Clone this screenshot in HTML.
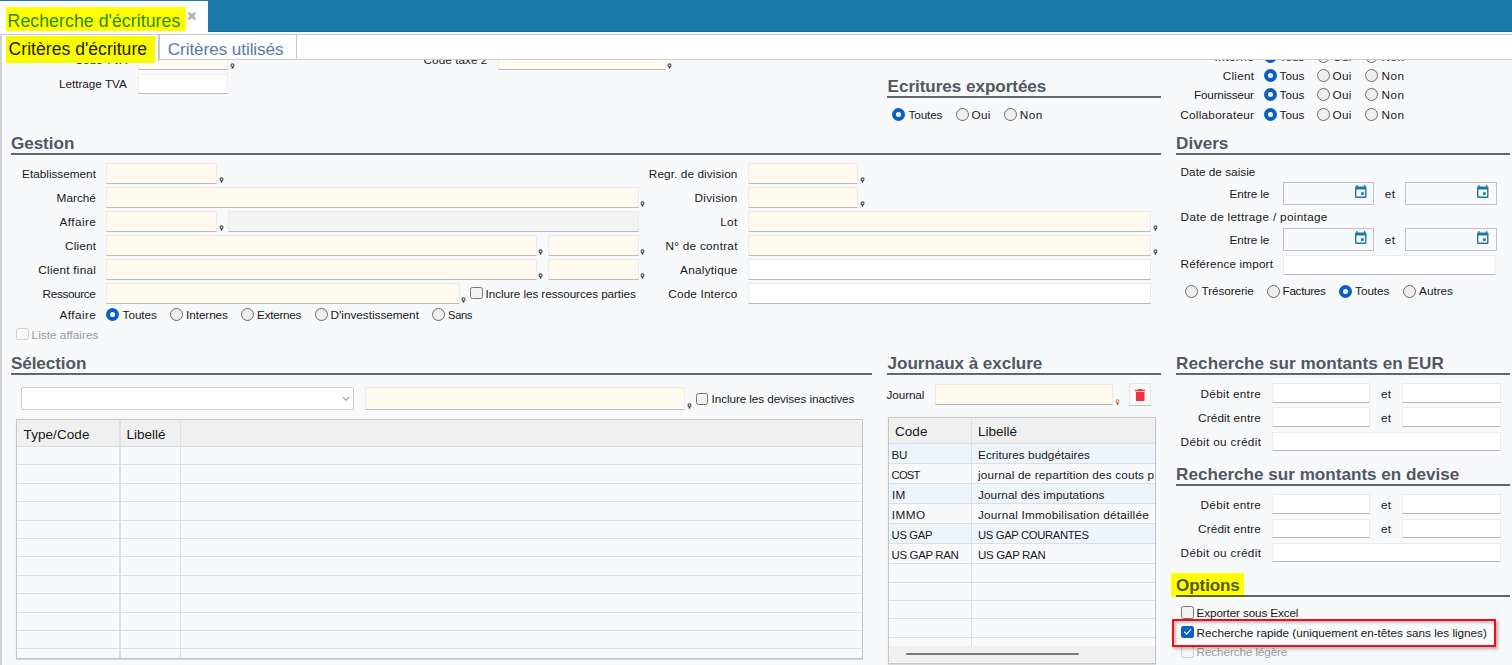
<!DOCTYPE html>
<html lang="fr"><head><meta charset="utf-8"><title>Recherche d'écritures</title>
<style>
html,body{margin:0;padding:0}
body{width:1512px;height:665px;overflow:hidden;position:relative;background:#f8f9fb;font-family:"Liberation Sans",sans-serif;}
.a{position:absolute;display:block}
.t{position:absolute;white-space:nowrap;line-height:1;display:block}
.in{border:1px solid #ececef;border-bottom:1.8px solid #b9b9bb;box-sizing:border-box}
.rd{width:13px;height:13px;border-radius:50%;box-sizing:border-box;border:1px solid #6b6b6b;background:#efefef}
.rd.on{border:4px solid #0a5fc2;background:#fff}
.cb{width:12.6px;height:12.4px;border-radius:2.5px;box-sizing:border-box;border:1px solid #767676;background:#f1f1f1}
.cb.dis{border-color:#cfcfcf;background:#f8f8f8}
.cb.chk{border:none;background:#0a5fc2}
.cb.chk:after{content:"";position:absolute;left:3.1px;top:3.6px;width:5.6px;height:2.6px;border-left:1.2px solid #fff;border-bottom:1.2px solid #fff;transform:rotate(-48deg)}
</style></head><body>
<span class="t " style="top:53px;line-height:13px;font-size:11.75px;letter-spacing:-0.046px;color:#181818;left:74.60px;">Code TVA</span>
<div class="a in" style="left:138.00px;top:49.80px;width:90.00px;height:20.50px;background:#fffaed;"></div>
<svg class="a" style="left:229.80px;top:63.40px" width="5" height="6" viewBox="0 0 5 6"><circle cx="2.5" cy="2.2" r="1.45" fill="none" stroke="#5a5a5a" stroke-width="1.25"/><path d="M1.5 3.9h2l-.4 1.9h-1.2z" fill="#444"/></svg>
<span class="t clip" style="top:53px;line-height:13px;font-size:11.75px;letter-spacing:0.044px;color:#181818;left:423.60px;">Code taxe 2</span>
<div class="a in" style="left:498.00px;top:49.80px;width:168.00px;height:20.50px;background:#fffaed;"></div>
<svg class="a" style="left:667.00px;top:63.40px" width="5" height="6" viewBox="0 0 5 6"><circle cx="2.5" cy="2.2" r="1.45" fill="none" stroke="#5a5a5a" stroke-width="1.25"/><path d="M1.5 3.9h2l-.4 1.9h-1.2z" fill="#444"/></svg>
<span class="t " style="top:77px;line-height:13px;font-size:11.75px;letter-spacing:-0.014px;color:#181818;left:58.90px;">Lettrage TVA</span>
<div class="a in" style="left:138.00px;top:74.30px;width:90.00px;height:20.00px;background:#fff;"></div>
<span class="t " style="top:50px;line-height:13px;font-size:11.75px;letter-spacing:0.450px;color:#181818;left:1214.61px;">Interne</span>
<div class="a rd on" style="left:1263.50px;top:50.20px"></div>
<span class="t " style="top:50px;line-height:13px;font-size:11.75px;letter-spacing:-0.007px;color:#181818;left:1279.60px;">Tous</span>
<div class="a rd" style="left:1317.00px;top:50.20px"></div>
<span class="t " style="top:50px;line-height:13px;font-size:11.75px;letter-spacing:0.257px;color:#181818;left:1332.60px;">Oui</span>
<div class="a rd" style="left:1365.00px;top:50.20px"></div>
<span class="t " style="top:50px;line-height:13px;font-size:11.75px;letter-spacing:0.450px;color:#181818;left:1381.52px;">Non</span>
<span class="t " style="top:69px;line-height:13px;font-size:11.75px;letter-spacing:0.212px;color:#181818;left:1222.80px;">Client</span>
<div class="a rd on" style="left:1263.50px;top:69.20px"></div>
<span class="t " style="top:69px;line-height:13px;font-size:11.75px;letter-spacing:-0.007px;color:#181818;left:1279.60px;">Tous</span>
<div class="a rd" style="left:1317.00px;top:69.20px"></div>
<span class="t " style="top:69px;line-height:13px;font-size:11.75px;letter-spacing:0.257px;color:#181818;left:1332.60px;">Oui</span>
<div class="a rd" style="left:1365.00px;top:69.20px"></div>
<span class="t " style="top:69px;line-height:13px;font-size:11.75px;letter-spacing:0.450px;color:#181818;left:1381.52px;">Non</span>
<span class="t " style="top:88px;line-height:13px;font-size:11.75px;letter-spacing:-0.224px;color:#181818;left:1194.10px;">Fournisseur</span>
<div class="a rd on" style="left:1263.50px;top:88.20px"></div>
<span class="t " style="top:88px;line-height:13px;font-size:11.75px;letter-spacing:-0.007px;color:#181818;left:1279.60px;">Tous</span>
<div class="a rd" style="left:1317.00px;top:88.20px"></div>
<span class="t " style="top:88px;line-height:13px;font-size:11.75px;letter-spacing:0.257px;color:#181818;left:1332.60px;">Oui</span>
<div class="a rd" style="left:1365.00px;top:88.20px"></div>
<span class="t " style="top:88px;line-height:13px;font-size:11.75px;letter-spacing:0.450px;color:#181818;left:1381.52px;">Non</span>
<span class="t " style="top:108px;line-height:13px;font-size:11.75px;letter-spacing:0.255px;color:#181818;left:1180.30px;">Collaborateur</span>
<div class="a rd on" style="left:1263.50px;top:108.20px"></div>
<span class="t " style="top:108px;line-height:13px;font-size:11.75px;letter-spacing:-0.007px;color:#181818;left:1279.60px;">Tous</span>
<div class="a rd" style="left:1317.00px;top:108.20px"></div>
<span class="t " style="top:108px;line-height:13px;font-size:11.75px;letter-spacing:0.257px;color:#181818;left:1332.60px;">Oui</span>
<div class="a rd" style="left:1365.00px;top:108.20px"></div>
<span class="t " style="top:108px;line-height:13px;font-size:11.75px;letter-spacing:0.450px;color:#181818;left:1381.52px;">Non</span>
<div class="a " style="left:0.00px;top:0.00px;width:1512.00px;height:31.60px;background:#1b7aab;"></div>
<div class="a " style="left:0.00px;top:30.60px;width:1512.00px;height:1.00px;background:#126fa2;"></div>
<div class="a " style="left:0.00px;top:31.60px;width:1512.00px;height:2.40px;background:#f3f7fa;"></div>
<div class="a " style="left:0.00px;top:34.00px;width:1512.00px;height:26.00px;background:#fff;border-top:1px solid #c9c9c9;border-bottom:1px solid #cdcdcd;box-sizing:border-box;"></div>
<div class="a " style="left:0.00px;top:1.00px;width:207.60px;height:33.00px;background:#fff;"></div>
<div class="a " style="left:6.00px;top:7.00px;width:180.00px;height:24.00px;background:#ffff00;"></div>
<span class="t " style="top:11px;line-height:20px;font-size:17.7px;letter-spacing:0.060px;color:#2c8a00;left:7.60px;">Recherche d'écritures</span>
<span class="t " style="top:7px;line-height:17px;font-size:15px;letter-spacing:0.000px;color:#b0b0b0;font-weight:bold;left:187.30px;text-shadow:.4px 0 0 #b0b0b0,-.4px 0 0 #b0b0b0,0 .4px 0 #b0b0b0;">×</span>
<div class="a " style="left:0.00px;top:34.00px;width:159.30px;height:28.00px;background:#fff;border:1px solid #c9c9c9;border-bottom:none;border-radius:3px 3px 0 0;box-sizing:border-box;"></div>
<div class="a " style="left:159.30px;top:34.00px;width:137.70px;height:26.00px;background:#fff;border:1px solid #c9c9c9;border-left-width:1.5px;border-right-width:1.7px;box-sizing:border-box;"></div>
<span class="t " style="top:39px;line-height:20px;font-size:17.2px;letter-spacing:-0.104px;color:#5b7ba6;left:167.80px;">Critères utilisés</span>
<div class="a " style="left:0.00px;top:36.00px;width:2.00px;height:629.00px;background:#d2d2d2;"></div>
<div class="a " style="left:5.80px;top:35.80px;width:149.20px;height:27.00px;background:#fbfb00;"></div>
<span class="t " style="top:39px;line-height:20px;font-size:17.5px;letter-spacing:0.047px;color:#1c1c00;left:8.60px;">Critères d'écriture</span>
<span class="t " style="top:77px;line-height:19px;font-size:17.1px;letter-spacing:-0.049px;color:#515763;font-weight:bold;left:887.60px;">Ecritures exportées</span>
<div class="a " style="left:887.00px;top:96.00px;width:274.00px;height:2.00px;background:#60656f;"></div>
<div class="a rd on" style="left:892.00px;top:107.50px"></div>
<span class="t " style="top:108px;line-height:13px;font-size:11.75px;letter-spacing:-0.164px;color:#181818;left:908.60px;">Toutes</span>
<div class="a rd" style="left:955.50px;top:107.50px"></div>
<span class="t " style="top:108px;line-height:13px;font-size:11.75px;letter-spacing:0.257px;color:#181818;left:971.60px;">Oui</span>
<div class="a rd" style="left:1003.50px;top:107.50px"></div>
<span class="t " style="top:108px;line-height:13px;font-size:11.75px;letter-spacing:0.450px;color:#181818;left:1019.77px;">Non</span>
<span class="t " style="top:134px;line-height:19px;font-size:17.1px;letter-spacing:-0.026px;color:#515763;font-weight:bold;left:10.90px;">Gestion</span>
<div class="a " style="left:11.00px;top:153.00px;width:1150.00px;height:2.00px;background:#60656f;"></div>
<span class="t " style="top:167px;line-height:13px;font-size:11.75px;letter-spacing:-0.000px;color:#181818;left:22.10px;">Etablissement</span>
<span class="t " style="top:191px;line-height:13px;font-size:11.75px;letter-spacing:0.024px;color:#181818;left:56.60px;">Marché</span>
<span class="t " style="top:215px;line-height:13px;font-size:11.75px;letter-spacing:0.425px;color:#181818;left:59.60px;">Affaire</span>
<span class="t " style="top:239px;line-height:13px;font-size:11.75px;letter-spacing:0.152px;color:#181818;left:65.10px;">Client</span>
<span class="t " style="top:263px;line-height:13px;font-size:11.75px;letter-spacing:0.249px;color:#181818;left:38.30px;">Client final</span>
<span class="t " style="top:287px;line-height:13px;font-size:11.75px;letter-spacing:-0.358px;color:#181818;left:42.60px;">Ressource</span>
<div class="a in" style="left:106.00px;top:163.30px;width:111.00px;height:20.50px;background:#fffaed;"></div>
<svg class="a" style="left:218.50px;top:177.30px" width="5" height="6" viewBox="0 0 5 6"><circle cx="2.5" cy="2.2" r="1.45" fill="none" stroke="#5a5a5a" stroke-width="1.25"/><path d="M1.5 3.9h2l-.4 1.9h-1.2z" fill="#444"/></svg>
<div class="a in" style="left:106.00px;top:187.30px;width:533.00px;height:20.50px;background:#fffaed;"></div>
<svg class="a" style="left:639.50px;top:201.30px" width="5" height="6" viewBox="0 0 5 6"><circle cx="2.5" cy="2.2" r="1.45" fill="none" stroke="#5a5a5a" stroke-width="1.25"/><path d="M1.5 3.9h2l-.4 1.9h-1.2z" fill="#444"/></svg>
<div class="a in" style="left:106.00px;top:211.30px;width:111.00px;height:20.50px;background:#fffaed;"></div>
<svg class="a" style="left:218.50px;top:225.30px" width="5" height="6" viewBox="0 0 5 6"><circle cx="2.5" cy="2.2" r="1.45" fill="none" stroke="#5a5a5a" stroke-width="1.25"/><path d="M1.5 3.9h2l-.4 1.9h-1.2z" fill="#444"/></svg>
<div class="a in" style="left:228.00px;top:211.30px;width:411.00px;height:20.50px;background:#f4f4f4;"></div>
<div class="a in" style="left:106.00px;top:235.30px;width:431.00px;height:20.50px;background:#fffaed;"></div>
<svg class="a" style="left:538.00px;top:249.30px" width="5" height="6" viewBox="0 0 5 6"><circle cx="2.5" cy="2.2" r="1.45" fill="none" stroke="#5a5a5a" stroke-width="1.25"/><path d="M1.5 3.9h2l-.4 1.9h-1.2z" fill="#444"/></svg>
<div class="a in" style="left:548.00px;top:235.30px;width:91.00px;height:20.50px;background:#fffaed;"></div>
<svg class="a" style="left:639.50px;top:249.30px" width="5" height="6" viewBox="0 0 5 6"><circle cx="2.5" cy="2.2" r="1.45" fill="none" stroke="#5a5a5a" stroke-width="1.25"/><path d="M1.5 3.9h2l-.4 1.9h-1.2z" fill="#444"/></svg>
<div class="a in" style="left:106.00px;top:259.30px;width:431.00px;height:20.50px;background:#fffaed;"></div>
<svg class="a" style="left:538.00px;top:273.30px" width="5" height="6" viewBox="0 0 5 6"><circle cx="2.5" cy="2.2" r="1.45" fill="none" stroke="#5a5a5a" stroke-width="1.25"/><path d="M1.5 3.9h2l-.4 1.9h-1.2z" fill="#444"/></svg>
<div class="a in" style="left:548.00px;top:259.30px;width:91.00px;height:20.50px;background:#fffaed;"></div>
<svg class="a" style="left:639.50px;top:273.30px" width="5" height="6" viewBox="0 0 5 6"><circle cx="2.5" cy="2.2" r="1.45" fill="none" stroke="#5a5a5a" stroke-width="1.25"/><path d="M1.5 3.9h2l-.4 1.9h-1.2z" fill="#444"/></svg>
<div class="a in" style="left:106.00px;top:283.30px;width:354.00px;height:20.50px;background:#fffaed;"></div>
<svg class="a" style="left:460.50px;top:297.30px" width="5" height="6" viewBox="0 0 5 6"><circle cx="2.5" cy="2.2" r="1.45" fill="none" stroke="#5a5a5a" stroke-width="1.25"/><path d="M1.5 3.9h2l-.4 1.9h-1.2z" fill="#444"/></svg>
<div class="a cb " style="left:470.00px;top:287.00px"></div>
<span class="t " style="top:287px;line-height:13px;font-size:11.75px;letter-spacing:-0.087px;color:#181818;left:485.60px;">Inclure les ressources parties</span>
<span class="t " style="top:308px;line-height:13px;font-size:11.75px;letter-spacing:0.425px;color:#181818;left:59.60px;">Affaire</span>
<div class="a rd on" style="left:105.90px;top:308.00px"></div>
<span class="t " style="top:308px;line-height:13px;font-size:11.75px;letter-spacing:-0.064px;color:#181818;left:122.60px;">Toutes</span>
<div class="a rd" style="left:170.00px;top:308.00px"></div>
<span class="t " style="top:308px;line-height:13px;font-size:11.75px;letter-spacing:-0.094px;color:#181818;left:186.10px;">Internes</span>
<div class="a rd" style="left:241.00px;top:308.00px"></div>
<span class="t " style="top:308px;line-height:13px;font-size:11.75px;letter-spacing:-0.296px;color:#181818;left:257.10px;">Externes</span>
<div class="a rd" style="left:314.50px;top:308.00px"></div>
<span class="t " style="top:308px;line-height:13px;font-size:11.75px;letter-spacing:-0.009px;color:#181818;left:330.60px;">D'investissement</span>
<div class="a rd" style="left:432.00px;top:308.00px"></div>
<span class="t " style="top:309px;line-height:12px;font-size:11.15px;letter-spacing:-0.371px;color:#181818;left:448.10px;">Sans</span>
<div class="a cb dis" style="left:16.00px;top:328.00px"></div>
<span class="t " style="top:328px;line-height:13px;font-size:11.75px;letter-spacing:0.030px;color:#9a9a9a;left:31.60px;">Liste affaires</span>
<span class="t " style="top:167px;line-height:13px;font-size:11.75px;letter-spacing:0.108px;color:#181818;left:648.80px;">Regr. de division</span>
<span class="t " style="top:191px;line-height:13px;font-size:11.75px;letter-spacing:0.238px;color:#181818;left:694.60px;">Division</span>
<span class="t " style="top:215px;line-height:13px;font-size:11.75px;letter-spacing:0.450px;color:#181818;left:720.13px;">Lot</span>
<span class="t " style="top:239px;line-height:13px;font-size:11.75px;letter-spacing:0.258px;color:#181818;left:665.60px;">N° de contrat</span>
<span class="t " style="top:263px;line-height:13px;font-size:11.75px;letter-spacing:0.270px;color:#181818;left:680.10px;">Analytique</span>
<span class="t " style="top:287px;line-height:13px;font-size:11.75px;letter-spacing:0.166px;color:#181818;left:668.30px;">Code Interco</span>
<div class="a in" style="left:748.00px;top:163.30px;width:110.00px;height:20.50px;background:#fffaed;"></div>
<svg class="a" style="left:859.50px;top:177.30px" width="5" height="6" viewBox="0 0 5 6"><circle cx="2.5" cy="2.2" r="1.45" fill="none" stroke="#5a5a5a" stroke-width="1.25"/><path d="M1.5 3.9h2l-.4 1.9h-1.2z" fill="#444"/></svg>
<div class="a in" style="left:748.00px;top:187.30px;width:110.00px;height:20.50px;background:#fffaed;"></div>
<svg class="a" style="left:859.50px;top:201.30px" width="5" height="6" viewBox="0 0 5 6"><circle cx="2.5" cy="2.2" r="1.45" fill="none" stroke="#5a5a5a" stroke-width="1.25"/><path d="M1.5 3.9h2l-.4 1.9h-1.2z" fill="#444"/></svg>
<div class="a in" style="left:748.00px;top:211.30px;width:403.00px;height:20.50px;background:#fffaed;"></div>
<svg class="a" style="left:1152.50px;top:225.30px" width="5" height="6" viewBox="0 0 5 6"><circle cx="2.5" cy="2.2" r="1.45" fill="none" stroke="#5a5a5a" stroke-width="1.25"/><path d="M1.5 3.9h2l-.4 1.9h-1.2z" fill="#444"/></svg>
<div class="a in" style="left:748.00px;top:235.30px;width:403.00px;height:20.50px;background:#fffaed;"></div>
<svg class="a" style="left:1152.50px;top:249.30px" width="5" height="6" viewBox="0 0 5 6"><circle cx="2.5" cy="2.2" r="1.45" fill="none" stroke="#5a5a5a" stroke-width="1.25"/><path d="M1.5 3.9h2l-.4 1.9h-1.2z" fill="#444"/></svg>
<div class="a in" style="left:748.00px;top:259.30px;width:403.00px;height:20.50px;background:#fff;"></div>
<div class="a in" style="left:748.00px;top:283.30px;width:403.00px;height:20.50px;background:#fff;"></div>
<span class="t " style="top:134px;line-height:19px;font-size:17.1px;letter-spacing:0.003px;color:#515763;font-weight:bold;left:1176.10px;">Divers</span>
<div class="a " style="left:1176.00px;top:153.00px;width:334.00px;height:2.00px;background:#60656f;"></div>
<span class="t " style="top:165px;line-height:13px;font-size:11.75px;letter-spacing:0.026px;color:#181818;left:1180.60px;">Date de saisie</span>
<span class="t " style="top:187px;line-height:13px;font-size:11.75px;letter-spacing:-0.099px;color:#181818;left:1229.60px;">Entre le</span>
<span class="t " style="top:187px;line-height:13px;font-size:11.75px;letter-spacing:0.450px;color:#181818;left:1384.73px;">et</span>
<span class="t " style="top:210px;line-height:13px;font-size:11.75px;letter-spacing:0.320px;color:#181818;left:1180.60px;">Date de lettrage / pointage</span>
<span class="t " style="top:233px;line-height:13px;font-size:11.75px;letter-spacing:-0.099px;color:#181818;left:1229.60px;">Entre le</span>
<span class="t " style="top:233px;line-height:13px;font-size:11.75px;letter-spacing:0.450px;color:#181818;left:1384.73px;">et</span>
<div class="a " style="left:1283.00px;top:182.00px;width:91.00px;height:23.00px;border:1px solid #c1c1c6;box-sizing:border-box;background:#f8f9fb;"></div>
<div class="a " style="left:1405.00px;top:182.00px;width:92.00px;height:23.00px;border:1px solid #c1c1c6;box-sizing:border-box;background:#f8f9fb;"></div>
<svg class="a" style="left:1355.00px;top:185.00px" width="11.5" height="13" viewBox="0 0 18 20"><path fill="#1b7aab" d="M14 0v2H4V0H2v2H1.8C.8 2 0 2.8 0 3.8V18.2c0 1 .8 1.8 1.8 1.8H16.2c1 0 1.8-.8 1.8-1.8V3.8c0-1-.8-1.8-1.8-1.8H16V0h-2zM2.2 7H15.8V17.8H2.2V7zm7.3 4.3v4.2h4.2v-4.2H9.500z"/></svg>
<svg class="a" style="left:1477.30px;top:185.00px" width="11.5" height="13" viewBox="0 0 18 20"><path fill="#1b7aab" d="M14 0v2H4V0H2v2H1.8C.8 2 0 2.8 0 3.8V18.2c0 1 .8 1.8 1.8 1.8H16.2c1 0 1.8-.8 1.8-1.8V3.8c0-1-.8-1.8-1.8-1.8H16V0h-2zM2.2 7H15.8V17.8H2.2V7zm7.3 4.3v4.2h4.2v-4.2H9.500z"/></svg>
<div class="a " style="left:1283.00px;top:227.50px;width:91.00px;height:23.00px;border:1px solid #c1c1c6;box-sizing:border-box;background:#f8f9fb;"></div>
<div class="a " style="left:1405.00px;top:227.50px;width:92.00px;height:23.00px;border:1px solid #c1c1c6;box-sizing:border-box;background:#f8f9fb;"></div>
<svg class="a" style="left:1355.00px;top:230.50px" width="11.5" height="13" viewBox="0 0 18 20"><path fill="#1b7aab" d="M14 0v2H4V0H2v2H1.8C.8 2 0 2.8 0 3.8V18.2c0 1 .8 1.8 1.8 1.8H16.2c1 0 1.8-.8 1.8-1.8V3.8c0-1-.8-1.8-1.8-1.8H16V0h-2zM2.2 7H15.8V17.8H2.2V7zm7.3 4.3v4.2h4.2v-4.2H9.500z"/></svg>
<svg class="a" style="left:1477.30px;top:230.50px" width="11.5" height="13" viewBox="0 0 18 20"><path fill="#1b7aab" d="M14 0v2H4V0H2v2H1.8C.8 2 0 2.8 0 3.8V18.2c0 1 .8 1.8 1.8 1.8H16.2c1 0 1.8-.8 1.8-1.8V3.8c0-1-.8-1.8-1.8-1.8H16V0h-2zM2.2 7H15.8V17.8H2.2V7zm7.3 4.3v4.2h4.2v-4.2H9.500z"/></svg>
<span class="t " style="top:257px;line-height:13px;font-size:11.75px;letter-spacing:0.145px;color:#181818;left:1180.60px;">Référence import</span>
<div class="a in" style="left:1283.00px;top:255.10px;width:213.00px;height:20.00px;background:#fff;"></div>
<div class="a rd" style="left:1185.00px;top:284.50px"></div>
<span class="t " style="top:284px;line-height:13px;font-size:11.75px;letter-spacing:-0.089px;color:#181818;left:1201.60px;">Trésorerie</span>
<div class="a rd" style="left:1266.50px;top:284.50px"></div>
<span class="t " style="top:284px;line-height:13px;font-size:11.75px;letter-spacing:-0.344px;color:#181818;left:1282.60px;">Factures</span>
<div class="a rd on" style="left:1338.50px;top:284.50px"></div>
<span class="t " style="top:284px;line-height:13px;font-size:11.75px;letter-spacing:-0.064px;color:#181818;left:1355.10px;">Toutes</span>
<div class="a rd" style="left:1402.50px;top:284.50px"></div>
<span class="t " style="top:284px;line-height:13px;font-size:11.75px;letter-spacing:-0.032px;color:#181818;left:1419.10px;">Autres</span>
<span class="t " style="top:354px;line-height:19px;font-size:17.1px;letter-spacing:-0.065px;color:#515763;font-weight:bold;left:10.90px;">Sélection</span>
<div class="a " style="left:11.00px;top:373.00px;width:861.00px;height:2.00px;background:#60656f;"></div>
<div class="a " style="left:20.50px;top:387.00px;width:333.00px;height:22.50px;background:#fff;border:1px solid #cfcfd2;border-radius:2px;box-sizing:border-box;"></div>
<svg class="a" style="left:341.5px;top:395.5px" width="8" height="6" viewBox="0 0 8 6"><path d="M.8 1.2 4 4.4 7.200 1.200" fill="none" stroke="#6a6a6a" stroke-width="1"/></svg>
<div class="a in" style="left:365.00px;top:387.00px;width:320.00px;height:23.00px;background:#fffaed;"></div>
<svg class="a" style="left:686.50px;top:403.40px" width="5" height="6" viewBox="0 0 5 6"><circle cx="2.5" cy="2.2" r="1.45" fill="none" stroke="#5a5a5a" stroke-width="1.25"/><path d="M1.5 3.9h2l-.4 1.9h-1.2z" fill="#444"/></svg>
<div class="a cb " style="left:695.50px;top:392.50px"></div>
<span class="t " style="top:392px;line-height:13px;font-size:11.75px;letter-spacing:-0.101px;color:#181818;left:711.60px;">Inclure les devises inactives</span>
<div class="a " style="left:16.00px;top:419.00px;width:846.50px;height:239.50px;border:1px solid #c6c6c9;box-sizing:border-box;box-shadow:0 1px 1px rgba(0,0,0,.12);"></div>
<div class="a " style="left:17.00px;top:420.00px;width:844.50px;height:26.20px;background:#f0f0f0;"></div>
<div class="a " style="left:17.00px;top:446.00px;width:844.50px;height:1.00px;background:#dddee1;"></div>
<div class="a " style="left:17.00px;top:464.40px;width:844.50px;height:1.00px;background:#dddee1;"></div>
<div class="a " style="left:17.00px;top:482.80px;width:844.50px;height:1.00px;background:#dddee1;"></div>
<div class="a " style="left:17.00px;top:501.20px;width:844.50px;height:1.00px;background:#dddee1;"></div>
<div class="a " style="left:17.00px;top:519.60px;width:844.50px;height:1.00px;background:#dddee1;"></div>
<div class="a " style="left:17.00px;top:538.00px;width:844.50px;height:1.00px;background:#dddee1;"></div>
<div class="a " style="left:17.00px;top:556.40px;width:844.50px;height:1.00px;background:#dddee1;"></div>
<div class="a " style="left:17.00px;top:574.80px;width:844.50px;height:1.00px;background:#dddee1;"></div>
<div class="a " style="left:17.00px;top:593.20px;width:844.50px;height:1.00px;background:#dddee1;"></div>
<div class="a " style="left:17.00px;top:611.60px;width:844.50px;height:1.00px;background:#dddee1;"></div>
<div class="a " style="left:17.00px;top:630.00px;width:844.50px;height:1.00px;background:#dddee1;"></div>
<div class="a " style="left:17.00px;top:648.40px;width:844.50px;height:1.00px;background:#dddee1;"></div>
<div class="a " style="left:119.40px;top:420.00px;width:1.20px;height:237.50px;background:#e0e0e2;"></div>
<div class="a " style="left:179.90px;top:420.00px;width:1.20px;height:237.50px;background:#e0e0e2;"></div>
<span class="t " style="top:427px;line-height:15px;font-size:13.5px;letter-spacing:0.064px;color:#181818;left:23.60px;">Type/Code</span>
<span class="t " style="top:427px;line-height:15px;font-size:13.5px;letter-spacing:-0.038px;color:#181818;left:126.60px;">Libellé</span>
<span class="t " style="top:354px;line-height:19px;font-size:17.1px;letter-spacing:-0.063px;color:#515763;font-weight:bold;left:887.60px;">Journaux à exclure</span>
<div class="a " style="left:887.00px;top:373.00px;width:274.00px;height:2.00px;background:#60656f;"></div>
<span class="t " style="top:388px;line-height:13px;font-size:11.75px;letter-spacing:-0.123px;color:#181818;left:886.60px;">Journal</span>
<div class="a in" style="left:935.00px;top:384.00px;width:178.00px;height:21.00px;background:#fffaed;"></div>
<svg class="a" style="left:1114.50px;top:399.00px" width="5" height="6" viewBox="0 0 5 6"><circle cx="2.5" cy="2.2" r="1.45" fill="none" stroke="#e8962e" stroke-width="1.25"/><path d="M1.5 3.9h2l-.4 1.9h-1.2z" fill="#555"/></svg>
<div class="a " style="left:1129.00px;top:383.00px;width:22.00px;height:23.00px;border:1px solid #e4e4e6;border-bottom:1px solid #bdbdbd;box-sizing:border-box;background:#f8f9fb;"></div>
<svg class="a" style="left:1134.8px;top:388.6px" width="10.4" height="12.6" viewBox="0 0 10.4 12.6"><path fill="#f4303f" d="M3.300 0h3.800l.6.700H10.400v1.500H0V.700h2.700zM.9 2.900h8.600v8.200c0 .8-.7 1.500-1.500 1.500H2.400c-.8 0-1.500-.7-1.500-1.500z"/></svg>
<div class="a " style="left:888.00px;top:417.00px;width:268.00px;height:246.50px;border:1px solid #c6c6c9;box-sizing:border-box;box-shadow:0 1px 1px rgba(0,0,0,.12);overflow:hidden;"></div>
<div class="a " style="left:889.00px;top:418.00px;width:266.00px;height:25.30px;background:#f0f0f0;"></div>
<div class="a " style="left:889.00px;top:444.00px;width:266.00px;height:20.00px;background:#edf5fc;"></div>
<span class="t " style="top:449px;line-height:12px;font-size:11.55px;letter-spacing:-0.245px;color:#181818;left:891.60px;">BU</span>
<span class="t " style="top:448px;line-height:13px;font-size:11.75px;letter-spacing:0.048px;color:#181818;left:978.00px;max-width:176.5px;overflow:hidden;">Ecritures budgétaires</span>
<span class="t " style="top:469px;line-height:12px;font-size:11.15px;letter-spacing:-0.724px;color:#181818;left:891.60px;">COST</span>
<span class="t " style="top:468px;line-height:13px;font-size:11.75px;letter-spacing:0.170px;color:#181818;left:978.00px;max-width:176.5px;overflow:hidden;">journal de repartition des couts p</span>
<div class="a " style="left:889.00px;top:484.00px;width:266.00px;height:20.00px;background:#edf5fc;"></div>
<span class="t " style="top:488px;line-height:13px;font-size:11.75px;letter-spacing:0.450px;color:#181818;left:891.90px;">IM</span>
<span class="t " style="top:488px;line-height:13px;font-size:11.75px;letter-spacing:0.105px;color:#181818;left:978.00px;max-width:176.5px;overflow:hidden;">Journal des imputations</span>
<span class="t " style="top:508px;line-height:13px;font-size:11.75px;letter-spacing:0.450px;color:#181818;left:891.84px;">IMMO</span>
<span class="t " style="top:508px;line-height:13px;font-size:11.75px;letter-spacing:0.218px;color:#181818;left:978.00px;max-width:176.5px;overflow:hidden;">Journal Immobilisation détaillée</span>
<div class="a " style="left:889.00px;top:524.00px;width:266.00px;height:20.00px;background:#edf5fc;"></div>
<span class="t " style="top:529px;line-height:12px;font-size:11.25px;letter-spacing:-0.342px;color:#181818;left:891.60px;">US GAP</span>
<span class="t " style="top:529px;line-height:12px;font-size:11.25px;letter-spacing:-0.344px;color:#181818;left:978.00px;max-width:176.5px;overflow:hidden;">US GAP COURANTES</span>
<span class="t " style="top:549px;line-height:12px;font-size:11.45px;letter-spacing:-0.346px;color:#181818;left:891.60px;">US GAP RAN</span>
<span class="t " style="top:549px;line-height:12px;font-size:11.55px;letter-spacing:-0.359px;color:#181818;left:978.00px;max-width:176.5px;overflow:hidden;">US GAP RAN</span>
<div class="a " style="left:889.00px;top:443.00px;width:266.00px;height:1.00px;background:#dddee1;"></div>
<div class="a " style="left:889.00px;top:463.00px;width:266.00px;height:1.00px;background:#dddee1;"></div>
<div class="a " style="left:889.00px;top:483.00px;width:266.00px;height:1.00px;background:#dddee1;"></div>
<div class="a " style="left:889.00px;top:503.00px;width:266.00px;height:1.00px;background:#dddee1;"></div>
<div class="a " style="left:889.00px;top:523.00px;width:266.00px;height:1.00px;background:#dddee1;"></div>
<div class="a " style="left:889.00px;top:543.00px;width:266.00px;height:1.00px;background:#dddee1;"></div>
<div class="a " style="left:889.00px;top:563.00px;width:266.00px;height:1.00px;background:#dddee1;"></div>
<div class="a " style="left:889.00px;top:581.50px;width:266.00px;height:1.00px;background:#dddee1;"></div>
<div class="a " style="left:889.00px;top:600.00px;width:266.00px;height:1.00px;background:#dddee1;"></div>
<div class="a " style="left:889.00px;top:618.30px;width:266.00px;height:1.00px;background:#dddee1;"></div>
<div class="a " style="left:889.00px;top:636.80px;width:266.00px;height:1.00px;background:#dddee1;"></div>
<div class="a " style="left:971.00px;top:418.00px;width:1.20px;height:228.20px;background:#e0e0e2;"></div>
<div class="a " style="left:889.00px;top:646.20px;width:266.00px;height:16.30px;background:#f0f0f0;"></div>
<div class="a " style="left:905.50px;top:652.60px;width:173.00px;height:2.40px;background:#7a7a7a;border-radius:1px;"></div>
<span class="t " style="top:424px;line-height:15px;font-size:13.5px;letter-spacing:0.009px;color:#181818;left:895.10px;">Code</span>
<span class="t " style="top:424px;line-height:15px;font-size:13.5px;letter-spacing:-0.038px;color:#181818;left:978.10px;">Libellé</span>
<span class="t " style="top:354px;line-height:19px;font-size:17.1px;letter-spacing:0.062px;color:#515763;font-weight:bold;left:1176.10px;">Recherche sur montants en EUR</span>
<div class="a " style="left:1176.00px;top:373.00px;width:334.00px;height:2.00px;background:#60656f;"></div>
<span class="t " style="top:387px;line-height:13px;font-size:11.75px;letter-spacing:0.282px;color:#181818;left:1200.60px;">Débit entre</span>
<span class="t " style="top:411px;line-height:13px;font-size:11.75px;letter-spacing:0.128px;color:#181818;left:1198.10px;">Crédit entre</span>
<span class="t " style="top:435px;line-height:13px;font-size:11.75px;letter-spacing:0.324px;color:#181818;left:1180.60px;">Débit ou crédit</span>
<div class="a in" style="left:1272.00px;top:383.00px;width:98.00px;height:20.00px;background:#fff;"></div>
<div class="a in" style="left:1402.00px;top:383.00px;width:99.00px;height:20.00px;background:#fff;"></div>
<span class="t " style="top:387px;line-height:13px;font-size:11.75px;letter-spacing:0.450px;color:#181818;left:1380.88px;">et</span>
<div class="a in" style="left:1272.00px;top:407.00px;width:98.00px;height:20.00px;background:#fff;"></div>
<div class="a in" style="left:1402.00px;top:407.00px;width:99.00px;height:20.00px;background:#fff;"></div>
<span class="t " style="top:411px;line-height:13px;font-size:11.75px;letter-spacing:0.450px;color:#181818;left:1380.88px;">et</span>
<div class="a in" style="left:1272.00px;top:432.00px;width:229.00px;height:19.00px;background:#fff;"></div>
<span class="t " style="top:465px;line-height:19px;font-size:17.1px;letter-spacing:0.003px;color:#515763;font-weight:bold;left:1176.10px;">Recherche sur montants en devise</span>
<div class="a " style="left:1176.00px;top:484.00px;width:334.00px;height:2.00px;background:#60656f;"></div>
<span class="t " style="top:498px;line-height:13px;font-size:11.75px;letter-spacing:0.282px;color:#181818;left:1200.60px;">Débit entre</span>
<span class="t " style="top:522px;line-height:13px;font-size:11.75px;letter-spacing:0.128px;color:#181818;left:1198.10px;">Crédit entre</span>
<span class="t " style="top:546px;line-height:13px;font-size:11.75px;letter-spacing:0.324px;color:#181818;left:1180.60px;">Débit ou crédit</span>
<div class="a in" style="left:1272.00px;top:494.00px;width:98.00px;height:20.00px;background:#fff;"></div>
<div class="a in" style="left:1402.00px;top:494.00px;width:99.00px;height:20.00px;background:#fff;"></div>
<span class="t " style="top:498px;line-height:13px;font-size:11.75px;letter-spacing:0.450px;color:#181818;left:1380.88px;">et</span>
<div class="a in" style="left:1272.00px;top:519.00px;width:98.00px;height:19.00px;background:#fff;"></div>
<div class="a in" style="left:1402.00px;top:519.00px;width:99.00px;height:19.00px;background:#fff;"></div>
<span class="t " style="top:522px;line-height:13px;font-size:11.75px;letter-spacing:0.450px;color:#181818;left:1380.88px;">et</span>
<div class="a in" style="left:1272.00px;top:543.00px;width:229.00px;height:19.00px;background:#fff;"></div>
<div class="a " style="left:1171.00px;top:573.00px;width:73.00px;height:24.00px;background:#ffff00;"></div>
<span class="t " style="top:576px;line-height:19px;font-size:17.1px;letter-spacing:-0.132px;color:#54590c;font-weight:bold;left:1176.10px;">Options</span>
<div class="a " style="left:1176.00px;top:595.00px;width:334.00px;height:2.00px;background:#60656f;"></div>
<div class="a " style="left:1176.00px;top:595.00px;width:68.00px;height:2.00px;background:#60650a;"></div>
<div class="a cb " style="left:1181.00px;top:606.30px"></div>
<span class="t " style="top:606px;line-height:13px;font-size:11.75px;letter-spacing:-0.149px;color:#181818;left:1196.60px;">Exporter sous Excel</span>
<div class="a cb dis" style="left:1181.00px;top:646.00px"></div>
<span class="t " style="top:645px;line-height:13px;font-size:11.75px;letter-spacing:-0.130px;color:#9a9a9a;left:1196.60px;">Recherche légère</span>
<div class="a " style="left:1172.00px;top:619.30px;width:324.00px;height:27.60px;border:2px solid #f20d14;box-sizing:border-box;background:#fafbfc;box-shadow:inset 2px 2px 3px rgba(0,0,0,.25), 2px 2px 3px rgba(0,0,0,.3);"></div>
<div class="a cb chk" style="left:1181.00px;top:625.60px"></div>
<span class="t " style="top:626px;line-height:13px;font-size:11.75px;letter-spacing:-0.019px;color:#181818;left:1196.60px;">Recherche rapide (uniquement en-têtes sans les lignes)</span>
</body></html>
